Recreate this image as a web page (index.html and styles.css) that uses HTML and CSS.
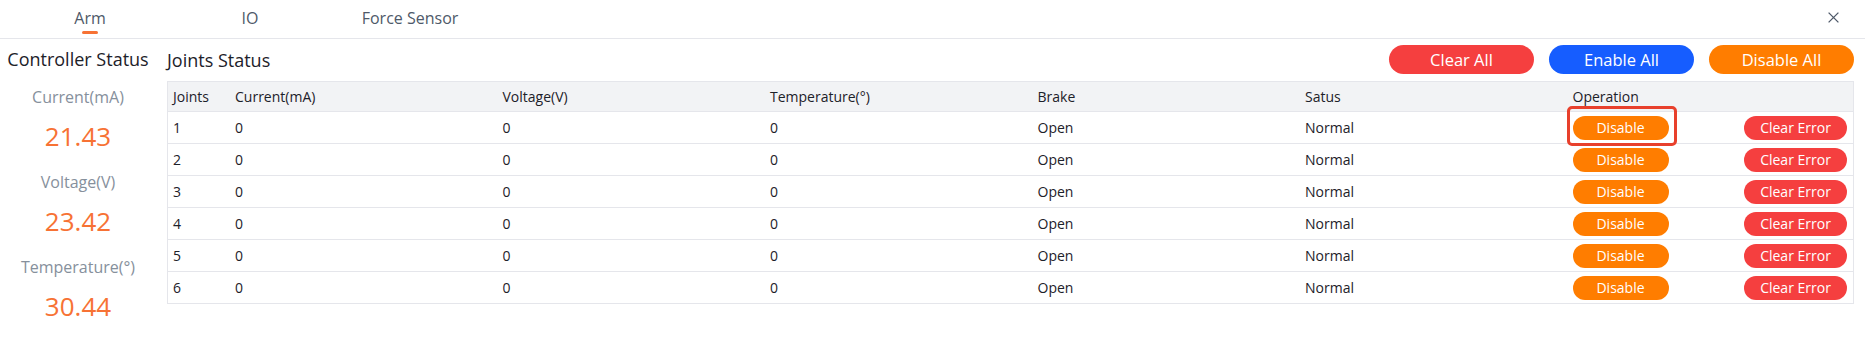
FILE: index.html
```html
<!DOCTYPE html>
<html>
<head>
<meta charset="utf-8">
<link rel="stylesheet" href="styles.css">
</head>
<body>
<div class="tabbar">
  <div class="tab active"><span class="tab-label">Arm</span><span class="tab-ink"></span></div>
  <div class="tab"><span class="tab-label">IO</span></div>
  <div class="tab"><span class="tab-label">Force Sensor</span></div>
  <div class="close">
    <svg width="11" height="11" viewBox="0 0 11 11"><path d="M0.6 0.6 L10.4 10.4 M10.4 0.6 L0.6 10.4" stroke="#4e5969" stroke-width="1.3" fill="none"/></svg>
  </div>
</div>
<div class="main">
  <div class="controller">
    <h2 class="title">Controller Status</h2>
    <div class="stats">
      <div class="stat"><div class="stat-label">Current(mA)</div><div class="stat-value">21.43</div></div>
      <div class="stat"><div class="stat-label">Voltage(V)</div><div class="stat-value">23.42</div></div>
      <div class="stat"><div class="stat-label">Temperature(°)</div><div class="stat-value">30.44</div></div>
    </div>
  </div>
  <div class="joints">
    <div class="joints-head">
      <h2 class="title">Joints Status</h2>
      <div class="actions">
        <button class="btn btn-big red">Clear All</button>
        <button class="btn btn-big blue">Enable All</button>
        <button class="btn btn-big orange">Disable All</button>
      </div>
    </div>
    <table class="grid">
      <colgroup>
        <col class="c-joint"><col class="c-std"><col class="c-std"><col class="c-std"><col class="c-std"><col class="c-std"><col>
      </colgroup>
      <thead>
        <tr><th>Joints</th><th>Current(mA)</th><th>Voltage(V)</th><th>Temperature(°)</th><th>Brake</th><th>Satus</th><th>Operation</th></tr>
      </thead>
      <tbody>
        <tr><td>1</td><td>0</td><td>0</td><td>0</td><td>Open</td><td>Normal</td><td><div class="ops"><span class="mark-wrap"><button class="btn btn-sm orange w-dis">Disable</button><span class="mark"></span></span><button class="btn btn-sm red w-clr">Clear Error</button></div></td></tr>
        <tr><td>2</td><td>0</td><td>0</td><td>0</td><td>Open</td><td>Normal</td><td><div class="ops"><button class="btn btn-sm orange w-dis">Disable</button><button class="btn btn-sm red w-clr">Clear Error</button></div></td></tr>
        <tr><td>3</td><td>0</td><td>0</td><td>0</td><td>Open</td><td>Normal</td><td><div class="ops"><button class="btn btn-sm orange w-dis">Disable</button><button class="btn btn-sm red w-clr">Clear Error</button></div></td></tr>
        <tr><td>4</td><td>0</td><td>0</td><td>0</td><td>Open</td><td>Normal</td><td><div class="ops"><button class="btn btn-sm orange w-dis">Disable</button><button class="btn btn-sm red w-clr">Clear Error</button></div></td></tr>
        <tr><td>5</td><td>0</td><td>0</td><td>0</td><td>Open</td><td>Normal</td><td><div class="ops"><button class="btn btn-sm orange w-dis">Disable</button><button class="btn btn-sm red w-clr">Clear Error</button></div></td></tr>
        <tr><td>6</td><td>0</td><td>0</td><td>0</td><td>Open</td><td>Normal</td><td><div class="ops"><button class="btn btn-sm orange w-dis">Disable</button><button class="btn btn-sm red w-clr">Clear Error</button></div></td></tr>
      </tbody>
    </table>
  </div>
</div>
</body>
</html>
```
FILE: styles.css
```css
* { box-sizing: border-box; }
html, body { margin: 0; padding: 0; background: #fff; }
body {
  font-family: "Open Sans", "Noto Sans", sans-serif;
  color: #1d2129;
  width: 1865px;
  height: 337px;
  overflow: hidden;
}
.tabbar {
  display: flex;
  height: 39px;
  border-bottom: 1px solid #e5e6eb;
  padding-left: 10px;
}
.tab {
  width: 160px;
  display: flex;
  flex-direction: column;
  align-items: center;
  padding-top: 7px;
}
.tab-label {
  font-size: 16px;
  line-height: 22px;
  color: #4e5969;
}
.tab-ink {
  width: 16px;
  height: 3px;
  margin-top: 2px;
  border-radius: 2px;
  background: #f77234;
}
.close {
  margin-left: auto;
  margin-right: 26px;
  padding-top: 12px;
  line-height: 0;
}
.main {
  display: flex;
  gap: 16px;
  padding: 6px 11px 0 5px;
}
.controller {
  width: 146px;
  padding-top: 2px;
  text-align: center;
}
.title {
  margin: 0;
  font-size: 18px;
  line-height: 24px;
  font-weight: 400;
  color: #1d2129;
  white-space: nowrap;
}
.stats {
  margin-top: 15px;
  display: flex;
  flex-direction: column;
  gap: 17px;
}
.stat {
  display: flex;
  flex-direction: column;
  gap: 10px;
}
.stat-label {
  font-size: 16px;
  line-height: 22px;
  color: #86909c;
}
.stat-value {
  font-size: 26px;
  line-height: 36px;
  color: #f77234;
}
.joints {
  flex: 1;
  min-width: 0;
}
.joints-head {
  display: flex;
  align-items: center;
  justify-content: space-between;
  height: 29px;
}
.actions {
  display: flex;
  gap: 15px;
}
.btn {
  border: none;
  color: #fff;
  font-family: "Open Sans", "Noto Sans", sans-serif;
  padding: 0;
  margin: 0;
  display: inline-flex;
  align-items: center;
  justify-content: center;
}
.btn-big {
  width: 145px;
  height: 29px;
  border-radius: 15px;
  font-size: 16.5px;
}
.btn-sm {
  height: 24px;
  border-radius: 12px;
  font-size: 14px;
}
.w-dis { width: 96px; }
.w-clr { width: 103px; }
.red { background: #f53f3f; }
.blue { background: #165dff; }
.orange { background: #ff7d00; }
.grid {
  margin-top: 7px;
  width: 100%;
  table-layout: fixed;
  border-collapse: separate;
  border-spacing: 0;
  border: 1px solid #e5e6eb;
  border-bottom: none;
  font-size: 14px;
}
.c-joint { width: 62px; }
.c-std { width: 267.5px; }
.grid th, .grid td {
  padding: 0 0 0 5px;
  text-align: left;
  font-weight: 400;
  border-bottom: 1px solid #e5e6eb;
  white-space: nowrap;
}
.grid th {
  background: #f2f3f5;
  line-height: 29px;
  height: 30px;
}
.grid td {
  line-height: 31px;
  height: 32px;
}
.ops {
  display: flex;
  align-items: center;
  justify-content: space-between;
  height: 31px;
  padding-right: 6px;
}
.mark-wrap {
  position: relative;
  display: inline-flex;
}
.mark {
  position: absolute;
  left: -6px;
  top: -10px;
  width: 110px;
  height: 40px;
  border: 3px solid #e8402c;
  border-radius: 5px;
}
```
